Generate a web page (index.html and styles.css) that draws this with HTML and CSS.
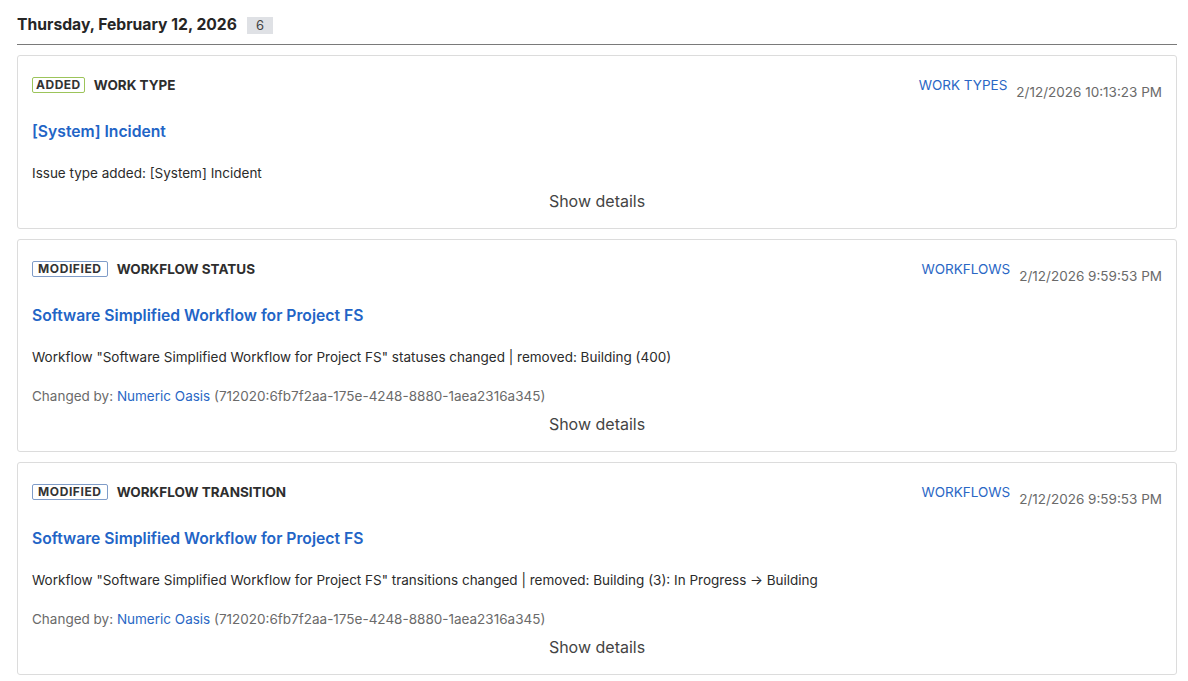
FILE: index.html
```html
<!DOCTYPE html>
<html>
<head>
<meta charset="utf-8">
<link rel="stylesheet" href="styles.css">
</head>
<body>
<div class="page">
  <div class="day-head">
    <span class="day-title">Thursday, February 12, 2026</span>
    <span class="count">6</span>
  </div>

  <div class="card">
    <div class="card-top">
      <div class="kind">
        <span class="tag tag-added">ADDED</span>
        <span class="kind-name">WORK TYPE</span>
      </div>
      <div class="meta">
        <a class="cat">WORK TYPES</a>
        <span class="time">2/12/2026 10:13:23 PM</span>
      </div>
    </div>
    <a class="title">[System] Incident</a>
    <div class="desc">Issue type added: [System] Incident</div>
    <div class="show">Show details</div>
  </div>

  <div class="card">
    <div class="card-top">
      <div class="kind">
        <span class="tag tag-mod">MODIFIED</span>
        <span class="kind-name">WORKFLOW STATUS</span>
      </div>
      <div class="meta">
        <a class="cat">WORKFLOWS</a>
        <span class="time">2/12/2026 9:59:53 PM</span>
      </div>
    </div>
    <a class="title">Software Simplified Workflow for Project FS</a>
    <div class="desc">Workflow "Software Simplified Workflow for Project FS" statuses changed | removed: Building (400)</div>
    <div class="by">Changed by: <a class="user">Numeric Oasis</a> (712020:6fb7f2aa-175e-4248-8880-1aea2316a345)</div>
    <div class="show">Show details</div>
  </div>

  <div class="card">
    <div class="card-top">
      <div class="kind">
        <span class="tag tag-mod">MODIFIED</span>
        <span class="kind-name">WORKFLOW TRANSITION</span>
      </div>
      <div class="meta">
        <a class="cat">WORKFLOWS</a>
        <span class="time">2/12/2026 9:59:53 PM</span>
      </div>
    </div>
    <a class="title">Software Simplified Workflow for Project FS</a>
    <div class="desc">Workflow "Software Simplified Workflow for Project FS" transitions changed | removed: Building (3): In Progress → Building</div>
    <div class="by">Changed by: <a class="user">Numeric Oasis</a> (712020:6fb7f2aa-175e-4248-8880-1aea2316a345)</div>
    <div class="show">Show details</div>
  </div>
</div>
</body>
</html>
```

FILE: styles.css
```css
* { box-sizing: border-box; }
html, body { margin: 0; padding: 0; background: #fff; }
body {
  font-family: Inter, "Noto Sans", sans-serif;
  color: #2b2b2b;
}
.page {
  padding: 14px 11px 0 17px;
  display: flex;
  flex-direction: column;
  gap: 10px;
}
.day-head {
  display: flex;
  align-items: center;
  gap: 10px;
  height: 21px;
  border-bottom: 1px solid #7a7a7a;
  box-sizing: content-box;
  padding-bottom: 9px;
}
.day-title {
  font-size: 15.7px;
  font-weight: 700;
  color: #262626;
}
.count {
  background: #dfe1e5;
  color: #444;
  font-size: 13px;
  line-height: 17px;
  padding: 0 9px;
  margin-top: 2px;
}
.card {
  border: 1px solid #dcdcdc;
  border-radius: 3px;
  padding: 19px 14px 17px 14px;
  display: flex;
  flex-direction: column;
}
.card-top {
  display: flex;
  justify-content: space-between;
  align-items: flex-start;
  height: 20px;
}
.kind {
  display: flex;
  align-items: center;
  gap: 9px;
  height: 20px;
}
.tag {
  font-size: 12px;
  font-weight: 700;
  line-height: 14px;
  padding: 0 3px;
  border-radius: 2px;
  color: #333;
  letter-spacing: 0.5px;
}
.tag-added { border: 1px solid #9cc45a; }
.tag-mod { border: 1px solid #7f9cc8; padding: 0 5px; letter-spacing: 0.6px; }
.kind-name {
  font-size: 13.5px;
  font-weight: 700;
  color: #2e2e2e;
}
.meta {
  display: flex;
  align-items: flex-start;
  gap: 9px;
}
.cat {
  color: #2a67c5;
  font-size: 13.5px;
  line-height: 20px;
}
.time {
  color: #6a6a6a;
  font-size: 13.5px;
  line-height: 20px;
  margin-top: 7px;
}
.title {
  margin-top: 27px;
  font-size: 15.7px;
  font-weight: 600;
  line-height: 20px;
  color: #2264c6;
}
.desc {
  margin-top: 22px;
  font-size: 13.5px;
  line-height: 18px;
  color: #2b2b2b;
}
.by {
  margin-top: 21px;
  font-size: 13.5px;
  line-height: 18px;
  color: #6a6a6a;
}
.user { color: #2a67c5; }
.show {
  margin-top: 9px;
  text-align: center;
  font-size: 16px;
  line-height: 20px;
  color: #444;
}
```
